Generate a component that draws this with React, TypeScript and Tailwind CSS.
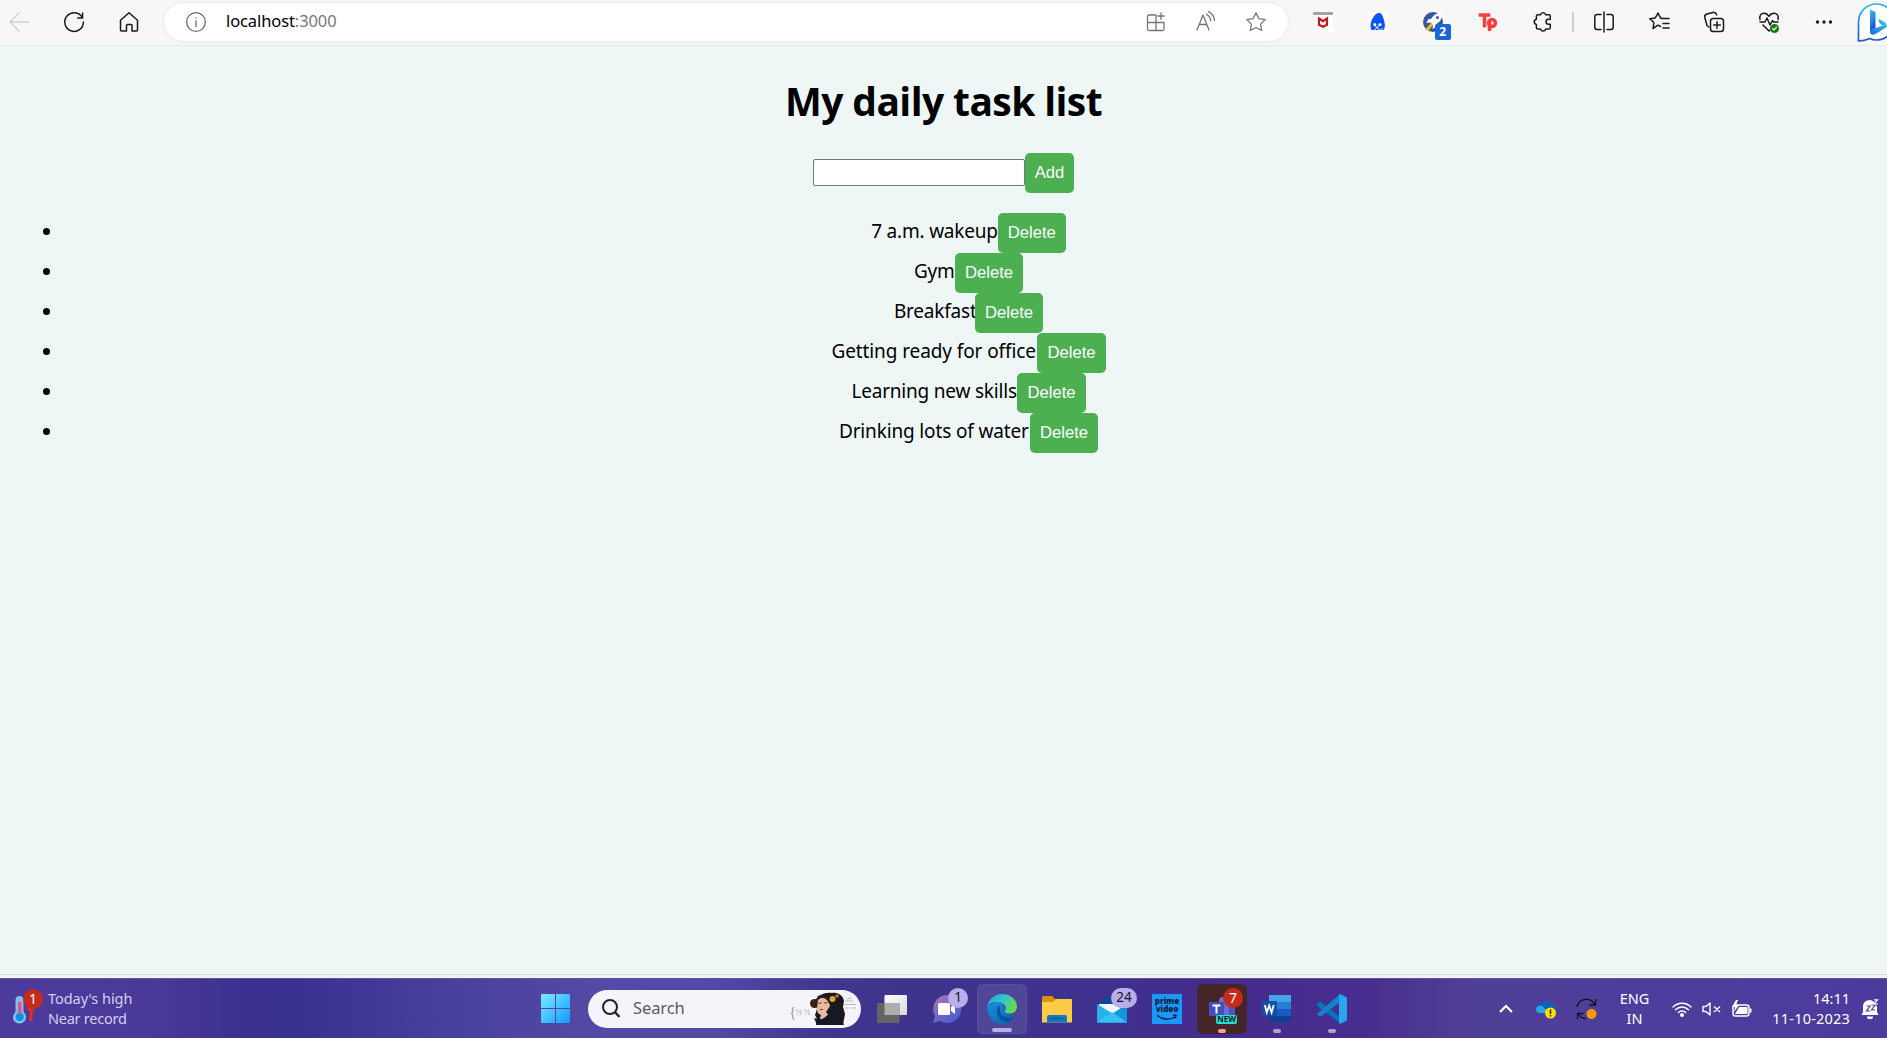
import type { ReactNode } from 'react';

const tasks = [
  { text: '7 a.m. wakeup', box: 'w-[126.5px] tracking-[-0.2px]' },
  { text: 'Gym', box: 'w-[41px] tracking-[-0.2px]' },
  { text: 'Breakfast', box: 'w-[81px] tracking-[-0.2px]' },
  { text: 'Getting ready for office', box: 'w-[206px] tracking-[-0.1px]' },
  { text: 'Learning new skills', box: 'w-[166px] tracking-[-0.2px]' },
  { text: 'Drinking lots of water', box: 'w-[191px] tracking-[-0.15px]' },
];

const green = 'h-10 shrink-0 rounded-[5px] bg-[#4caf50] px-[10px] font-["Liberation_Sans",sans-serif] text-[16.67px] leading-[20px] text-white';

function Cell({ children, className = 'w-[55px]' }: { children: ReactNode; className?: string }) {
  return <div className={`flex h-full shrink-0 items-center justify-center ${className}`}>{children}</div>;
}

function Line({ children, size = 20, className = 'text-[#1b1b1b]', w = 1.3 }: { children: ReactNode; size?: number; className?: string; w?: number }) {
  return (
    <svg width={size} height={size} viewBox="0 0 20 20" fill="none" stroke="currentColor" strokeWidth={w} strokeLinecap="round" strokeLinejoin="round" className={`shrink-0 overflow-visible ${className}`}>
      {children}
    </svg>
  );
}

function Toolbar() {
  return (
    <header className="flex h-[46px] w-full shrink-0 items-center overflow-hidden border-b border-[#e8ebeb] bg-[#f7f7f7] pb-[2px]">
      <Cell className="-ml-[9px] w-[55px]">
        <Line className="text-[#cfcfcf]"><path d="M10 1 1 10l9 9M1 10h19" /></Line>
      </Cell>
      <Cell>
        <Line w={1.5}><path d="M18.2 5.5A9.3 9.3 0 1 0 19.4 10M18.6 1v5h-5" /></Line>
      </Cell>
      <Cell>
        <Line w={1.5}><path d="M1.5 8.3 10 .8l8.500 7.500V18a1 1 0 0 1-1 1H13v-5.500a1 1 0 0 0-1-1H8.500a1 1 0 0 0-1 1V19h-5a1 1 0 0 1-1-1z" /></Line>
      </Cell>
      <div className="ml-2 flex h-[38px] w-[1124px] shrink-0 items-center rounded-full bg-white shadow-[0_0_3px_#dcdcdc]">
        <Line className="ml-[22px] text-[#6b6b6b]"><circle cx="10" cy="10" r="9.400" /><path d="M10 9v5.500M10 5.700v.3" /></Line>
        <span className="ml-5 w-[111px] whitespace-nowrap font-['Noto_Sans',sans-serif] text-[16.5px] tracking-[-0.1px] text-black">localhost<span className="text-[#777]">:3000</span></span>
        <div className="ml-auto mr-[22px] flex items-center gap-[30px]">
          <Line className="text-[#767676]"><path d="M10 3H3a1.500 1.500 0 0 0-1.500 1.500V17A1.500 1.500 0 0 0 3 18.500h13.500A1.500 1.500 0 0 0 18 17v-6.500H1.500M10 3v15.500M15 .8v6.400M11.800 4h6.400" /></Line>
          <Line className="text-[#767676]"><path d="m1 18 6-15 6 15M3.200 12.500h7.600M10.500 2.300a7 7 0 0 1 4 6.500M12.500-.3a10.500 10.500 0 0 1 6 9" /></Line>
          <Line className="text-[#767676]"><path d="m10 .8 2.800 5.900 6.400.9-4.600 4.500 1.100 6.400-5.700-3-5.700 3 1.100-6.400L.8 7.600l6.400-.9z" /></Line>
        </div>
      </div>
      <Cell className="ml-[7px] w-[55px]">
        <svg width="20" height="20" viewBox="0 0 20 20"><path fill="#fff" d="M0 2h20v18H0z" /><rect width="20" height="3" rx="1" fill="#a6a0a0" /><path d="m6 6.500 4 2.600 4-2.600v6.300l-4 2-4-2z" fill="none" stroke="#c4161c" strokeWidth="2.200" /></svg>
      </Cell>
      <Cell>
        <svg width="20" height="20" viewBox="0 0 20 20"><rect width="20" height="20" rx="2" fill="#fff" /><path fill="#0a53ff" d="M3.500 18C1.500 14 3 9.500 4.500 6.500 6.300 3 8.500 1 11 1s3.300 2 4.300 5c1 3 3 9 .2 12z" /><path d="m6 13 3 2.500 3-2.500M6 18.500l3-3 3 3 2.500-2.500" fill="none" stroke="#fff" strokeWidth="1" /><circle cx="6.800" cy="12.500" r="1.500" fill="#fff" /><circle cx="12" cy="12.500" r="1.500" fill="#fff" /></svg>
      </Cell>
      <Cell>
        <div className="relative h-5 w-5">
          <svg width="20" height="20" viewBox="0 0 20 20"><circle cx="10" cy="10" r="10" fill="#37559f" /><path d="M2.500 17 8 11l2 2-4.500 6z" fill="#fdb813" /><path d="M19.500.5C14 .5 10.500 3 8.500 6.500L5 7.500 3.500 11l4-.5 2.500 2.500-.5 4 3.500-2 1-3.500C17.500 9.500 19.500 6 19.500.5z" fill="#fff" /><circle cx="14.500" cy="5.500" r="1.500" fill="#37559f" /></svg>
          <span className="absolute left-[12.500px] top-[12px] flex h-4 w-[15.500px] items-center justify-center rounded-[2px] bg-[#1a66d6] font-['Open_Sans',sans-serif] text-[12px] font-bold text-white">2</span>
        </div>
      </Cell>
      <Cell>
        <svg width="20" height="20" viewBox="0 0 20 20" fill="none" stroke="#fa3e3e" strokeWidth="3.500"><path d="M2.500 3h8M6.500 3v10.500" strokeLinecap="square" /><path d="M11.500 19V8" /><circle cx="14" cy="11" r="3.400" /></svg>
      </Cell>
      <Cell>
        <Line w={1.5}><path d="M7.500 2.800a2.700 2.700 0 0 1 5.200 0h3.300a1.300 1.300 0 0 1 1.300 1.300v3.200h-1.800a2.500 2.500 0 0 0 0 5h1.800v3.500a1.300 1.300 0 0 1-1.300 1.300h-3.300a2.700 2.700 0 0 1-5.200 0H4.700a1.300 1.300 0 0 1-1.300-1.300v-3.300a2.700 2.700 0 0 1 0-5.300V4.100a1.300 1.300 0 0 1 1.300-1.300z" /></Line>
      </Cell>
      <div className="mx-[2px] h-5 w-[2px] shrink-0 bg-[#cdcdcd]" />
      <Cell>
        <Line w={1.5}><path d="M7 2.500H3A2.200 2.200 0 0 0 .8 4.700v10.600A2.200 2.200 0 0 0 3 17.500h4M13 2.500h4a2.200 2.200 0 0 1 2.200 2.200v10.600a2.200 2.200 0 0 1-2.200 2.200h-4M10 0v20" /></Line>
      </Cell>
      <Cell>
        <Line w={1.5}><path d="M13 6.500H20M14 11.500h6M14 16h6M11.500 14.500l-2.500-1.300-5 3.300.9-6L.8 6.800l5.500-.9L9 1l2.600 5.200h1.500" /></Line>
      </Cell>
      <Cell>
        <Line w={1.5}><rect x="6.500" y="6.500" width="13" height="13" rx="2.800" /><path d="M13 9.700v6.600M9.700 13h6.600M4.800 15 3 13.500.8 5.500a3 3 0 0 1 2-3.500L9 .4A3 3 0 0 1 12.600 3" /></Line>
      </Cell>
      <Cell>
        <svg width="20" height="20" viewBox="0 0 20 20" fill="none" stroke="#1b1b1b" strokeWidth="1.500" strokeLinecap="round" strokeLinejoin="round" className="overflow-visible"><path d="M1 7.500C0 3.500 2.200 1.300 5 1.300c2.500 0 4 1.500 5 3 1-1.500 2.500-3 5-3 2.800 0 5 2.200 4 6.200M1 10h5l2-4 3 7 2.500-4.500 1 1.500H19M4 13l6 6 1-1" /><circle cx="15.500" cy="16.500" r="4.500" fill="#107c10" stroke="none" /><path d="m13.500 16.500 1.500 1.500 2.600-2.800" stroke="#fff" strokeWidth="1.200" /></svg>
      </Cell>
      <Cell>
        <svg width="20" height="20" viewBox="0 0 20 20" fill="#1b1b1b"><circle cx="3.500" cy="10" r="1.700" /><circle cx="10" cy="10" r="1.700" /><circle cx="16.500" cy="10" r="1.700" /></svg>
      </Cell>
      <svg width="38" height="40" viewBox="0 0 38 40" className="ml-[6px] shrink-0 overflow-visible">
        <defs>
          <linearGradient id="ring" x1="0" y1="0" x2="0" y2="1"><stop stopColor="#22b5ef" /><stop offset="1" stopColor="#2358d5" /></linearGradient>
          <linearGradient id="bee" x1="0" y1="0" x2="0.300" y2="1"><stop stopColor="#39c2f5" /><stop offset="1" stopColor="#1552d8" /></linearGradient>
          <linearGradient id="tail" x1="1" y1="0" x2="0" y2="1"><stop stopColor="#3dd6e8" /><stop offset="1" stopColor="#1968e0" /></linearGradient>
        </defs>
        <path d="M1.500 39V20A18 18 0 1 1 19.500 38c-3 0-5-.6-7-1.500-3 1.500-6 2.500-11 2.500z" fill="#fff" stroke="url(#ring)" strokeWidth="1.700" />
        <path d="m13 7.500 5.500 2.500v16L13 29z" fill="url(#bee)" />
        <path d="M13 28v1.500c0 3 2.500 4 5 2.800L30 25c0-4-3-6-9-8l2 5 3 1.500z" fill="url(#tail)" />
      </svg>
    </header>
  );
}

function TaskPage() {
  return (
    <main className="flex-1 bg-[#eef7f6] font-['Noto_Sans',sans-serif] text-black">
      <h1 className="flex h-[107px] items-center justify-center whitespace-nowrap pt-1 font-['Open_Sans',sans-serif] text-[39px] font-bold tracking-[-0.6px]">
        <span>My daily task list</span>
      </h1>
      <form className="flex items-center justify-center" onSubmit={(e) => e.preventDefault()}>
        <input aria-label="Task" className="mb-px h-[27px] w-[212px] rounded-[2px] border border-[#767676] bg-white px-1" />
        <button className={green}>Add</button>
      </form>
      <ul className="mt-5">
        {tasks.map((t) => (
          <li key={t.text} className="flex h-10 items-center pl-[43px]">
            <span className="mb-[3px] h-[7px] w-[7px] shrink-0 rounded-full bg-black" />
            <div className="flex flex-1 items-center justify-center">
              <span className={`whitespace-nowrap pb-1 text-[19px] leading-[26px] ${t.box}`}>{t.text}</span>
              <button className={green}>Delete</button>
            </div>
          </li>
        ))}
      </ul>
    </main>
  );
}

function App32({ children }: { children: ReactNode }) {
  return <svg width="32" height="32" viewBox="0 0 32 32" className="shrink-0 overflow-visible">{children}</svg>;
}

function Slot({ children, active = '', mark = '' }: { children: ReactNode; active?: string; mark?: string }) {
  return (
    <div className={`relative mr-[5px] flex h-[50px] w-[50px] shrink-0 items-center justify-center rounded-md ${active}`}>
      {children}
      {mark && <span className={`absolute bottom-[1px] h-1 rounded-full ${mark}`} />}
    </div>
  );
}

function Taskbar() {
  return (
    <footer className="relative flex h-[60px] w-full shrink-0 items-center border-t border-[#5f5596] bg-[linear-gradient(90deg,#4d3b9c_0%,#4a3999_8%,#3a3190_13%,#3a3291_16%,#4a429f_25%,#544aa6_32%,#5249a5_38%,#40368f_44%,#3d338d_50%,#3e328e_58%,#452b8c_64%,#472d8e_72%,#503f96_78%,#4d3e9d_86%,#4c3a9d_100%)] font-['Noto_Sans',sans-serif] text-white">
      <div className="flex w-[536px] shrink-0 items-center pl-3">
        <div className="relative h-[42px] w-[32px]">
          <svg width="32" height="42" viewBox="0 0 32 42">
            <path d="M3.500 12a4 4 0 0 1 8 0v12a6.500 6.500 0 1 1-8 0z" fill="#7cc0f4" /><path d="M6 14h3.500v14H6z" fill="#e9507c" /><circle cx="7.700" cy="29" r="4" fill="#1090d8" /><path d="M15.500 20h7v2l-2 1v10h-3V23l-2-1z" fill="#f0271b" />
          </svg>
          <span className="absolute left-[11px] top-[1px] flex h-5 w-5 items-center justify-center rounded-full bg-[#c42b1c] text-[14px]">1</span>
        </div>
        <div className="-mt-0.5 ml-1 whitespace-nowrap text-[14.500px] leading-5 text-[#d5cfee]">
          <div className="tracking-[-0.05px]">Today's high</div>
          <div className="tracking-[-0.25px]">Near record</div>
        </div>
      </div>
      <svg width="29" height="29" viewBox="0 0 29 29" className="ml-[5px] shrink-0">
        <defs><linearGradient id="win" gradientUnits="userSpaceOnUse" x1="0" y1="0" x2="29" y2="29"><stop stopColor="#7deaff" /><stop offset="1" stopColor="#0f9bff" /></linearGradient></defs>
        <path fill="url(#win)" d="M0 1a1 1 0 0 1 1-1h13v14H0zM15 0h13a1 1 0 0 1 1 1v13H15zM0 15h14v14H1a1 1 0 0 1-1-1zM15 15h14v13a1 1 0 0 1-1 1H15z" />
      </svg>
      <div className="ml-[18px] flex h-[38px] w-[273px] shrink-0 items-center rounded-full bg-[#f5f4fa]">
        <svg width="18" height="19" viewBox="0 0 18 19" className="ml-[14px]" fill="none" stroke="#222" strokeWidth="2"><circle cx="8" cy="8" r="7" /><path d="m12.800 13 4.700 5" strokeWidth="2.400" /></svg>
        <span className="ml-[13px] text-[16.500px] tracking-[-0.1px] text-[#5c5c5c]">Search</span>
        <span className="ml-auto flex items-center pt-2 font-['Liberation_Serif',serif] text-[8px] text-[#99969d]"><span className="text-[14px]">{'{'}</span>½ ½</span>
        <svg width="48" height="34" viewBox="0 0 48 34" className="mr-[3px] overflow-visible">
          <path d="M35 9h8M37 7l5-1M34 12.500h12M35 16h4m2 0h5" stroke="#bbb8bf" strokeWidth="1" />
          <path d="M5 9C8 3 15 0 22 1c7-1 11 3 12 8l-1 6 2 7-2 11H6l1-6-2-4 2-6z" fill="#1a181b" />
          <circle cx="4.500" cy="11.500" r="4.500" fill="#3b2018" />
          <path d="M8 8c2-3 7-4 11-1l1 7-4 6 4 5-4 5H9l2-7c-3-1-4-3-4-6z" fill="#e8b8a3" />
          <path d="m8.500 11.500 3-.7M14 11l3.500-.5M10 17.500h3" stroke="#7b3c32" strokeWidth="1.200" />
          <path d="M4 26c4 1 6 2 10 0 4-3 8-8 9-13 4 6 8 12 11 20H7z" fill="#141923" />
          <path d="M8 6c5-4 10-1 13 6" fill="none" stroke="#251c1c" strokeWidth="3" />
          <circle cx="22.500" cy="7" r="3" fill="#d9a13a" /><circle cx="27" cy="4" r="1.800" fill="#b86f28" />
        </svg>
      </div>
      <div className="ml-[6px] flex h-full shrink-0 items-center">
        <Slot>
          <App32>
            <defs><linearGradient id="tv" x1="0" y1="0" x2="1" y2="1"><stop stopColor="#fff" /><stop offset="1" stopColor="#d9d9d9" /></linearGradient></defs>
            <rect x="8.500" y="2" width="22.500" height="20" rx="1" fill="url(#tv)" /><rect x="1" y="10" width="22.500" height="20" rx="1" fill="#646464" /><path d="M8.500 10h15v12h-15z" fill="#adadad" />
          </App32>
        </Slot>
        <Slot>
          <App32>
            <defs><linearGradient id="chat" x1="0" y1="0" x2="0.700" y2="1"><stop stopColor="#a878b4" /><stop offset="1" stopColor="#4c5cce" /></linearGradient></defs>
            <path d="M16 2a14 14 0 1 1-7 26l-7 2 2-7A14 14 0 0 1 16 2z" fill="url(#chat)" /><rect x="7" y="10" width="12" height="12" rx="1.500" fill="#fff" /><path d="m20 14 4-3v10l-4-3z" fill="#fff" />
          </App32>
          <span className="absolute right-[4px] top-[4px] flex h-5 w-5 items-center justify-center rounded-full bg-[#b9aeea] text-[13.500px] text-[#171327]">1</span>
        </Slot>
        <Slot active="border border-white/5 bg-white/10" mark="w-5 bg-[#b9aeea]">
          <svg width="30" height="30" viewBox="0 0 30 30">
            <defs>
              <linearGradient id="e1" x1="0" y1="0.300" x2="1" y2="0.600"><stop stopColor="#2aa8dd" /><stop offset="0.500" stopColor="#36c6c6" /><stop offset="1" stopColor="#67dd45" /></linearGradient>
              <linearGradient id="e2" x1="0" y1="0" x2="0.600" y2="1"><stop stopColor="#1a96dd" /><stop offset="1" stopColor="#0a68bb" /></linearGradient>
            </defs>
            <path d="M.3 12C0 21 5 30 15 30c5 0 9.500-2.500 12-6.500L18 17 15 5z" fill="url(#e2)" />
            <path d="M.3 12C2 4.500 8 0 15 0c8.500 0 15 6 15 12.500 0 4.500-3.300 7-7.300 7-3.500 0-5-1-5-2 0-.8 1-1.200 1-3.500 0-3-3-6-7.700-6C6 8 2 9.500.3 12z" fill="url(#e1)" />
            <path d="M13 11.500c-3 2-3.500 5.500-2.500 9 1.500 4.500 5.500 7.500 11 7.500 2.500-1.300 4.700-3.200 6-5.500-5 2.200-13.500 1.500-14.500-5-.3-2.200.2-4.500 0-6z" fill="#10509b" />
          </svg>
        </Slot>
        <Slot>
          <App32>
            <path d="M1 5a2 2 0 0 1 2-2h8l3 3h5v9H1z" fill="#dc9407" /><path d="M1 9h11l3-3h15a1 1 0 0 1 1 1v22.500H1z" fill="#fdcb45" /><path d="M6 29.500V24a2 2 0 0 1 2-2h16a2 2 0 0 1 2 2v5.500z" fill="#1178c6" /><path d="M10 25.500h12" stroke="#0a4f8e" strokeWidth="1.300" />
          </App32>
        </Slot>
        <Slot>
          <App32>
            <path d="m1 11 15-9 15 9-15 12z" fill="#0b4b94" /><path d="M3 11h26v9l-13 6-13-9z" fill="#f2f6fa" /><path d="M1 11v18.500h30z" fill="#29b0ec" /><path d="M31 11v18.500H3l28-18.500z" fill="#1793dc" /><path d="M1 29.500 16 19l15 10.500z" fill="#35c1f2" />
          </App32>
          <span className="absolute right-0 top-[4px] flex h-5 w-[26px] items-center justify-center rounded-full bg-[#b9aeea] text-[13.500px] text-[#171327]">24</span>
        </Slot>
        <Slot>
          <div className="flex h-[30px] w-[30px] flex-col items-center bg-[#1a98ff] pt-[3px] font-['Open_Sans',sans-serif] text-[8px] font-extrabold leading-[8.500px] text-[#071d35]">
            <span>prime</span><span>video</span>
            <svg width="22" height="7" viewBox="0 0 22 7" fill="none" stroke="currentColor" strokeWidth="1.300"><path d="M1 1c5 5 13 5 18 2M17 1.500l3-.5-.5 3.500" /></svg>
          </div>
        </Slot>
        <Slot active="bg-[#442528]" mark="w-2 bg-[#ff99a0]">
          <App32>
            <circle cx="17" cy="8" r="4" fill="#6872d8" /><rect x="11" y="10" width="18" height="18" rx="3" fill="#6670d4" /><rect x="23" y="12" width="6" height="14" rx="2" fill="#4c55b6" /><rect x="3" y="9" width="15" height="14" rx="1" fill="#444dbb" /><path d="M6.500 12.500h8M10.500 12.500v8" stroke="#fff" strokeWidth="2" />
          </App32>
          <span className="absolute right-[4px] top-[4px] flex h-5 w-5 items-center justify-center rounded-full bg-[#c42b1c] text-[14px]">7</span>
          <span className="absolute left-[19px] top-[31px] flex h-[9px] w-[21px] items-center justify-center rounded-[2px] bg-[#24e0d3] font-['Open_Sans',sans-serif] text-[8px] font-bold text-[#062222]">NEW</span>
        </Slot>
        <Slot mark="w-2 bg-[#b2a0cc]">
          <App32>
            <path d="M8 2h22v7H8z" fill="#41a5ee" /><path d="M8 9h22v7H8z" fill="#2b7cd3" /><path d="M8 16h22v7H8z" fill="#185abd" /><path d="M8 23h22v6H8z" fill="#103f91" /><rect x="1" y="8" width="15" height="15" rx="1" fill="#174ea8" /><path d="m3.800 12 2 7.500 2.400-7 2.400 7 2.100-7.500" fill="none" stroke="#fff" strokeWidth="1.800" />
          </App32>
        </Slot>
        <Slot mark="w-2 bg-[#b2a0cc]">
          <App32>
            <path d="m1 11 3-2.500 20 15V30L1 13z" fill="#0873b8" /><path d="M1 21 24 1l1 7.500L4 24z" fill="#1083cf" /><path d="m24 1 7 3.500v23L24 31l-1-1V2z" fill="#27a5ee" />
          </App32>
        </Slot>
      </div>
      <div className="ml-auto flex h-full shrink-0 items-center">
        <svg width="14" height="9" viewBox="0 0 14 9" fill="none" stroke="#fff" strokeWidth="2.200" className="mr-[23px]"><path d="m1 8 6-6 6 6" /></svg>
        <svg width="20" height="18" viewBox="0 0 20 18" className="mr-5 shrink-0 overflow-visible"><path d="M4 13a4 4 0 0 1 0-8 6.500 6.500 0 0 1 12 0 4 4 0 0 1 0 8z" fill="#0b62bd" /><path d="M0 9.500A4 4 0 0 1 6 6l8 7H4a3.500 3.500 0 0 1-4-3.500z" fill="#28a6e8" /><circle cx="14.500" cy="13" r="5.500" fill="#ffe100" /><path d="M14.500 9.500v4.500M14.500 15v1.500" stroke="#222" strokeWidth="1.500" /></svg>
        <svg width="21" height="22" viewBox="0 0 21 22" fill="none" stroke="#111" strokeWidth="1.300" className="mr-[22px]"><path d="M1 9a9.500 9.500 0 0 1 18-2M19.500 1v6h-6M1.500 21v-5.500h6M2 16c2 3 5 4.500 8 4.500" /><circle cx="15.500" cy="16" r="5" fill="#ff9800" stroke="none" /></svg>
        <div className="-mt-0.5 mr-[22px] w-[31px] text-center text-[14.500px] leading-5"><div>ENG</div><div>IN</div></div>
        <svg width="20" height="16" viewBox="0 0 20 16" fill="none" stroke="#fff" strokeWidth="1.400" strokeLinecap="round" className="mr-[10px]"><path d="M1 6a12.700 12.700 0 0 1 18 0M3.500 8.800a9 9 0 0 1 13 0M6.300 11.500a5.200 5.200 0 0 1 7.400 0" /><circle cx="10" cy="14" r="1.300" fill="#fff" /></svg>
        <svg width="19" height="14" viewBox="0 0 19 14" fill="none" stroke="#fff" strokeWidth="1.400" className="mr-[11px]"><path d="M1 4.500h3L8 1v12L4 9.500H1zM12 4.500l6 5.500M18 4.500 12 10" strokeLinejoin="round" /></svg>
        <svg width="20" height="17" viewBox="0 0 20 17" className="mr-[19px]"><rect x="1" y="5" width="16" height="11" rx="2.500" fill="none" stroke="#fff" strokeWidth="1.500" /><path d="M18 8.500h1.500v4H18zM7 7h8.500v7H3l3-5z" fill="#fff" /><path d="m4 0-4 7h3l-1 5 5-7H4l2-5z" fill="#fff" /></svg>
        <div className="-mt-0.5 w-[79px] whitespace-nowrap text-right text-[14.500px] leading-5"><div>14:11</div><div className="tracking-[0.2px]">11-10-2023</div></div>
        <svg width="18" height="20" viewBox="0 0 18 20" className="ml-[11px] mr-2"><path d="M2 7a6.500 6.500 0 0 1 11-4l3 5v5l1.500 3H.5L2 13z" fill="#fff" /><path d="M6 17.500h6a3 3 0 0 1-6 0z" fill="#fff" /><path d="M5.500 7H9l-3.500 5H9M10.500 6h3.500l-3.500 5h3.500" fill="none" stroke="#4c3a9d" strokeWidth="1.200" /><path d="M13 .8h3.500L13 5h4" fill="none" stroke="#fff" strokeWidth="1.200" /></svg>
      </div>
    </footer>
  );
}

export default function App() {
  return (
    <div className="flex h-screen w-full flex-col overflow-hidden">
      <Toolbar />
      <TaskPage />
      <div className="h-1 shrink-0 border-t border-[#dcdcdc] bg-[#f3f3f3]" />
      <Taskbar />
    </div>
  );
}
